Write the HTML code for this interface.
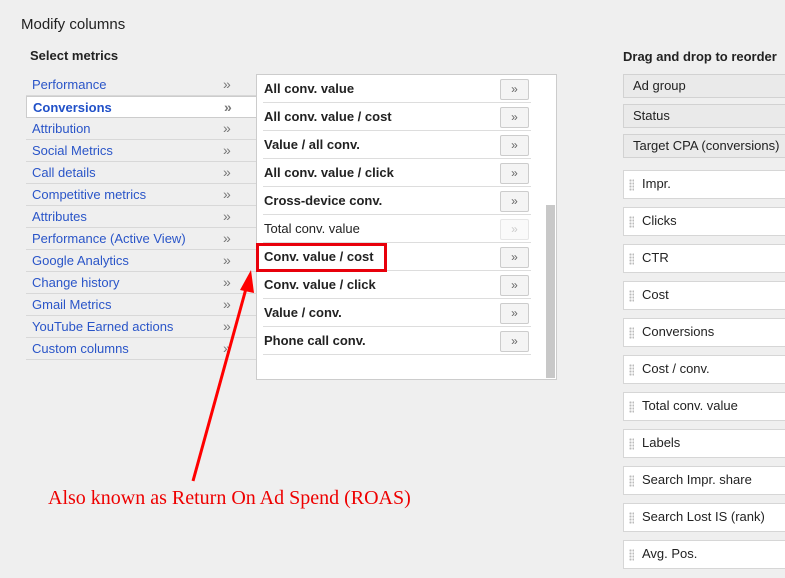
<!DOCTYPE html><html><head><style>
body{margin:0;width:785px;height:578px;background:#efefef;font-family:"Liberation Sans",Arial,sans-serif;position:relative;overflow:hidden}
.a{position:absolute}
.l{position:absolute;left:26px;width:231px;height:22px;border-bottom:1px solid #d8d8d8;box-sizing:border-box;color:#2a55c8;font-size:13px;line-height:21px;padding-left:6px}
.l:after{content:"»";position:absolute;left:197px;color:#777;font-size:14px}
.m{position:absolute;left:263px;width:268px;height:28px;border-bottom:1px solid #ddd;box-sizing:border-box;font-size:13px;font-weight:bold;color:#222;line-height:28px;padding-left:1px}
.m b{position:absolute;left:237px;top:4px;width:27px;height:19px;border:1px solid #ccc;background:#f4f4f4;border-radius:2px;font-weight:normal;color:#666;text-align:center;line-height:18px;font-size:12px}
.f{position:absolute;left:623px;width:170px;height:24px;background:#eaeaea;border:1px solid #d2d2d2;box-sizing:border-box;font-size:13px;line-height:22px;padding-left:9px;color:#222}
.d{position:absolute;left:623px;width:170px;height:29px;background:#fff;border:1px solid #d6d6d6;box-sizing:border-box;font-size:13px;line-height:26px;padding-left:18px;color:#222}
.d:before{content:"";position:absolute;left:5px;top:8px;width:5px;height:12px;background-image:radial-gradient(circle,#bbb 1px,transparent 1.2px);background-size:3px 3px}
</style></head><body>
<div class="a" style="left:21px;top:16px;font-size:15px;color:#222">Modify columns</div>
<div class="a" style="left:30px;top:48px;font-size:13px;font-weight:bold;color:#222">Select metrics</div>
<div class="l" style="top:74px">Performance</div>
<div class="l" style="top:96px;background:#fff;border:1px solid #ccc;font-weight:bold;color:#2050c8;padding-left:6px">Conversions</div>
<div class="l" style="top:118px">Attribution</div>
<div class="l" style="top:140px">Social Metrics</div>
<div class="l" style="top:162px">Call details</div>
<div class="l" style="top:184px">Competitive metrics</div>
<div class="l" style="top:206px">Attributes</div>
<div class="l" style="top:228px">Performance (Active View)</div>
<div class="l" style="top:250px">Google Analytics</div>
<div class="l" style="top:272px">Change history</div>
<div class="l" style="top:294px">Gmail Metrics</div>
<div class="l" style="top:316px">YouTube Earned actions</div>
<div class="l" style="top:338px">Custom columns</div>
<div class="a" style="left:256px;top:74px;width:301px;height:306px;background:#fff;border:1px solid #ccc;box-sizing:border-box"></div>
<div class="a" style="left:546px;top:205px;width:9px;height:173px;background:#c8c8c8"></div>
<div class="m" style="top:75px">All conv. value<b>»</b></div>
<div class="m" style="top:103px">All conv. value / cost<b>»</b></div>
<div class="m" style="top:131px">Value / all conv.<b>»</b></div>
<div class="m" style="top:159px">All conv. value / click<b>»</b></div>
<div class="m" style="top:187px">Cross-device conv.<b>»</b></div>
<div class="m" style="top:215px;font-weight:normal">Total conv. value<b style="color:#ccc;background:#fafafa;border-color:#e6e6e6">»</b></div>
<div class="m" style="top:243px">Conv. value / cost<b>»</b></div>
<div class="m" style="top:271px">Conv. value / click<b>»</b></div>
<div class="m" style="top:299px">Value / conv.<b>»</b></div>
<div class="m" style="top:327px">Phone call conv.<b>»</b></div>
<div class="a" style="left:256px;top:243px;width:131px;height:29px;border:3px solid #e8000b;box-sizing:border-box"></div>
<div class="a" style="left:623px;top:49px;font-size:13px;font-weight:bold;color:#222;white-space:nowrap">Drag and drop to reorder</div>
<div class="f" style="top:74px">Ad group</div>
<div class="f" style="top:104px">Status</div>
<div class="f" style="top:134px">Target CPA (conversions)</div>
<div class="d" style="top:170px">Impr.</div>
<div class="d" style="top:207px">Clicks</div>
<div class="d" style="top:244px">CTR</div>
<div class="d" style="top:281px">Cost</div>
<div class="d" style="top:318px">Conversions</div>
<div class="d" style="top:355px">Cost / conv.</div>
<div class="d" style="top:392px">Total conv. value</div>
<div class="d" style="top:429px">Labels</div>
<div class="d" style="top:466px">Search Impr. share</div>
<div class="d" style="top:503px">Search Lost IS (rank)</div>
<div class="d" style="top:540px">Avg. Pos.</div>
<svg class="a" style="left:0;top:0" width="785" height="578"><line x1="193" y1="481" x2="247" y2="285" stroke="#f00" stroke-width="3"/><polygon points="251,270 240,290 254,293" fill="#f00"/></svg>
<div class="a" style="left:48px;top:487px;font-family:'Liberation Serif',serif;font-size:20px;color:#e00;white-space:nowrap">Also known as Return On Ad Spend (ROAS)</div>
</body></html>
